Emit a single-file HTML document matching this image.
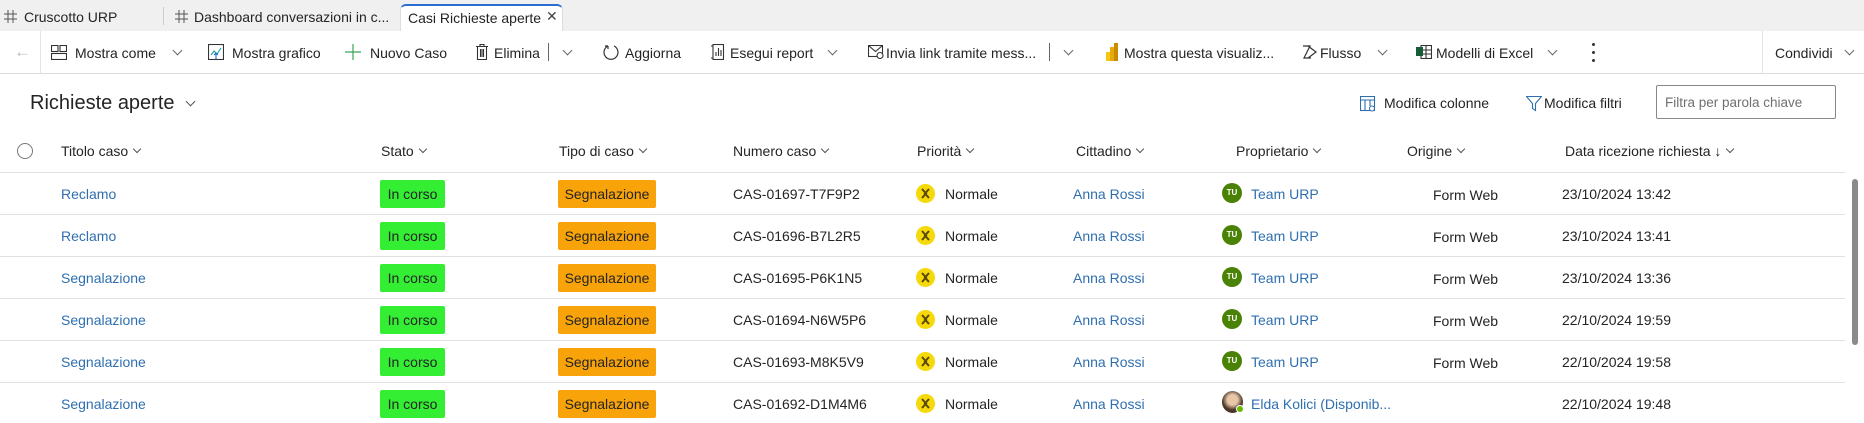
<!DOCTYPE html>
<html><head><meta charset="utf-8"><style>
*{margin:0;padding:0;box-sizing:border-box}
body{width:1864px;height:423px;overflow:hidden;background:#fff;font-family:"Liberation Sans",sans-serif;color:#242424;font-size:14px;position:relative}
.a{position:absolute;white-space:nowrap}
.tabs{position:absolute;left:0;top:0;width:1864px;height:31px;background:#f0f0f0}
.tb{position:absolute;left:0;top:31px;width:1864px;height:43px;border-bottom:1px solid #dcdcdc;background:#fff}
.tt{top:45px;font-size:14px;color:#242424}
.ch{position:absolute;top:47px;width:7px;height:7px;border-right:1px solid #666;border-bottom:1px solid #666;transform:rotate(45deg)}
.h{top:143px;font-size:14px;color:#242424}
.h:after{content:"";display:inline-block;width:5px;height:5px;border-right:1px solid #555;border-bottom:1px solid #555;transform:rotate(45deg);margin-left:6px;vertical-align:4px}
.sep{position:absolute;left:0;width:1845px;height:1px;background:#e1e1e1}
.lk{color:#2f6fb0}
.bg{position:absolute;left:380px;width:65px;height:28px;background:#33ee33;border-radius:2px;text-align:center;line-height:28px;color:#242424}
.bo{position:absolute;left:558px;width:98px;height:28px;background:#f8a30a;border-radius:2px;text-align:center;line-height:28px;color:#242424}
.pi{position:absolute;left:916px;width:19px;height:19px;border-radius:50%;background:#f5d90a}
.av{position:absolute;left:1222px;width:20px;height:20px;border-radius:50%;background:#498205;color:#fff;font-size:8px;font-weight:bold;text-align:center;line-height:20px}
</style></head><body>
<svg width="0" height="0" style="position:absolute"><defs><symbol id="px" viewBox="0 0 19 19"><path d="M6 5l4 4.5-4 4.5M13 5l-4 4.5 4 4.5" fill="none" stroke="#5a4a00" stroke-width="2"/></symbol></defs></svg>
<div class="tabs"></div>
<div class="a" style="left:400px;top:4px;width:163px;height:28px;background:#fff;border-top:2px solid #2a6fd0;border-radius:6px 6px 0 0;border-left:1px solid #ddd;border-right:1px solid #ddd"></div>
<svg class="a" style="left:4px;top:10px" width="13" height="13" viewBox="0 0 13 13" stroke="#555" fill="none"><path d="M0 4h13M0 9h13M4 0v13M9 0v13"/></svg>
<div class="a" style="left:24px;top:9px;font-size:14px">Cruscotto URP</div>
<div class="a" style="left:163px;top:7px;width:1px;height:18px;background:#ccc"></div>
<svg class="a" style="left:175px;top:10px" width="13" height="13" viewBox="0 0 13 13" stroke="#555" fill="none"><path d="M0 4h13M0 9h13M4 0v13M9 0v13"/></svg>
<div class="a" style="left:194px;top:9px;font-size:14px">Dashboard conversazioni in c...</div>
<div class="a" style="left:408px;top:10px;font-size:14px">Casi Richieste aperte</div>
<div class="a" style="left:546px;top:8px;font-size:14px;color:#444">&#x2715;</div>

<div class="tb"></div>
<div class="a" style="left:14px;top:42px;color:#bbb;font-size:17px">&#x2190;</div>
<div class="a" style="left:40px;top:31px;width:1px;height:43px;background:#e3e3e3"></div>
<svg class="a" style="left:51px;top:45px" width="16" height="15" viewBox="0 0 16 15" fill="none" stroke="#333" stroke-width="1.1"><rect x="0.5" y="0.5" width="6.5" height="6"/><rect x="9" y="0.5" width="6.5" height="6"/><rect x="0.5" y="8.5" width="15" height="6"/></svg>
<div class="a tt" style="left:75px">Mostra come</div><div class="ch" style="left:174px"></div>
<svg class="a" style="left:208px;top:44px" width="16" height="16" viewBox="0 0 16 16" fill="none" stroke="#333" stroke-width="1.1"><rect x="0.5" y="0.5" width="15" height="15"/><path d="M3 11l3-4 3 3 4-6" stroke="#1aa0a0"/><path d="M8 15V9m-2 2l2-2 2 2" stroke="#1a6fd0"/></svg>
<div class="a tt" style="left:232px">Mostra grafico</div>
<svg class="a" style="left:345px;top:44px" width="16" height="16" viewBox="0 0 16 16" stroke="#3aa35a" stroke-width="1.2"><path d="M8 0v16M0 8h16"/></svg>
<div class="a tt" style="left:370px">Nuovo Caso</div>
<svg class="a" style="left:476px;top:44px" width="12" height="16" viewBox="0 0 12 16" fill="none" stroke="#333" stroke-width="1.1"><path d="M0 2.5h12M4 2.5V.5h4v2M1.5 2.5v13h9v-13M4.5 5v8M6 5v8M7.5 5v8"/></svg>
<div class="a tt" style="left:494px">Elimina</div>
<div class="a" style="left:548px;top:43px;width:1px;height:18px;background:#666"></div>
<div class="ch" style="left:564px"></div>
<svg class="a" style="left:603px;top:44px" width="16" height="16" viewBox="0 0 16 16" fill="none" stroke="#333" stroke-width="1.2"><path d="M5 2A7 7 0 1 0 11 2"/><path d="M5 2V5M5 2H2"/></svg>
<div class="a tt" style="left:625px">Aggiorna</div>
<svg class="a" style="left:711px;top:44px" width="14" height="16" viewBox="0 0 14 16" fill="none" stroke="#333" stroke-width="1.1"><rect x="2" y="0.5" width="10.5" height="15"/><path d="M0 2h2M0 14h2M5 12V8M7.5 12V4M10 12V6"/></svg>
<div class="a tt" style="left:730px">Esegui report</div><div class="ch" style="left:829px"></div>
<svg class="a" style="left:868px;top:45px" width="16" height="14" viewBox="0 0 16 14" fill="none" stroke="#333" stroke-width="1.1"><rect x="0.5" y="0.5" width="14" height="11"/><path d="M0.5 0.5l7 6 7-6"/><circle cx="12" cy="10.5" r="3" fill="#fff"/></svg>
<div class="a tt" style="left:886px">Invia link tramite mess...</div>
<div class="a" style="left:1049px;top:43px;width:1px;height:18px;background:#666"></div>
<div class="ch" style="left:1065px"></div>
<svg class="a" style="left:1106px;top:43px" width="12" height="18" viewBox="0 0 12 18"><rect x="0" y="9" width="4" height="9" fill="#f2c811"/><rect x="4" y="4" width="4" height="14" fill="#e8a90a"/><rect x="8" y="0" width="4" height="18" fill="#c98b00"/></svg>
<div class="a tt" style="left:1124px">Mostra questa visualiz...</div>
<svg class="a" style="left:1302px;top:45px" width="15" height="14" viewBox="0 0 15 14" fill="none" stroke="#333" stroke-width="1.2"><path d="M1 1h7L2 13h7M6 1l8 6-8 6"/></svg>
<div class="a tt" style="left:1320px">Flusso</div><div class="ch" style="left:1379px"></div>
<svg class="a" style="left:1416px;top:45px" width="16" height="14" viewBox="0 0 16 14" fill="none" stroke="#333" stroke-width="1.1"><rect x="5" y="0.5" width="10.5" height="13"/><path d="M5 5h10.5M5 9h10.5M10 0.5v13"/><rect x="0" y="2" width="7" height="9" fill="#185c37" stroke="none"/></svg>
<div class="a tt" style="left:1436px">Modelli di Excel</div><div class="ch" style="left:1549px"></div>
<div class="a" style="left:1592px;top:43px;width:3px;height:3px;background:#333;border-radius:50%"></div>
<div class="a" style="left:1592px;top:51px;width:3px;height:3px;background:#333;border-radius:50%"></div>
<div class="a" style="left:1592px;top:59px;width:3px;height:3px;background:#333;border-radius:50%"></div>
<div class="a" style="left:1762px;top:31px;width:1px;height:43px;background:#e3e3e3"></div>
<div class="a tt" style="left:1775px">Condividi</div><div class="ch" style="left:1846px"></div>

<div class="a" style="left:30px;top:92px;font-size:20px;color:#242424">Richieste aperte</div>
<div class="a" style="left:187px;top:98px;width:7px;height:7px;border-right:1px solid #555;border-bottom:1px solid #555;transform:rotate(45deg)"></div>
<svg class="a" style="left:1360px;top:96px" width="16" height="16" viewBox="0 0 16 16" fill="none" stroke="#2f6fb0" stroke-width="1.1"><rect x="0.5" y="0.5" width="14" height="14"/><path d="M0.5 4h14M5 4v11M10 4v6"/><circle cx="12" cy="12.5" r="2.5" fill="#fff"/></svg>
<div class="a" style="left:1384px;top:95px">Modifica colonne</div>
<svg class="a" style="left:1526px;top:96px" width="16" height="16" viewBox="0 0 16 16" fill="none" stroke="#2f6fb0" stroke-width="1.1"><path d="M0.5 0.5h15l-6 7v7l-3-2v-5z"/></svg>
<div class="a" style="left:1544px;top:95px">Modifica filtri</div>
<div class="a" style="left:1656px;top:85px;width:180px;height:34px;border:1px solid #888;border-radius:2px"></div>
<div class="a" style="left:1665px;top:95px;color:#707070;font-size:13.5px">Filtra per parola chiave</div>

<div class="a" style="left:17px;top:143px;width:16px;height:16px;border:1px solid #777;border-radius:50%"></div>
<div class="a h" style="left:61px">Titolo caso</div>
<div class="a h" style="left:381px">Stato</div>
<div class="a h" style="left:559px">Tipo di caso</div>
<div class="a h" style="left:733px">Numero caso</div>
<div class="a h" style="left:917px">Priorità</div>
<div class="a h" style="left:1076px">Cittadino</div>
<div class="a h" style="left:1236px">Proprietario</div>
<div class="a h" style="left:1407px">Origine</div>
<div class="a h" style="left:1565px">Data ricezione richiesta &#x2193;</div>

<div class="sep" style="top:172px"></div>
<div class="sep" style="top:214px"></div>
<div class="sep" style="top:256px"></div>
<div class="sep" style="top:298px"></div>
<div class="sep" style="top:340px"></div>
<div class="sep" style="top:382px"></div>

<div class="a lk" style="left:61px;top:186px">Reclamo</div>
<div class="bg" style="top:180px">In corso</div><div class="bo" style="top:180px">Segnalazione</div>
<div class="a" style="left:733px;top:186px">CAS-01697-T7F9P2</div>
<svg class="pi" style="top:184px"><use href="#px"/></svg><div class="a" style="left:945px;top:186px">Normale</div>
<div class="a lk" style="left:1073px;top:186px">Anna Rossi</div>
<div class="av" style="top:183px">TU</div><div class="a lk" style="left:1251px;top:186px">Team URP</div>
<div class="a" style="left:1433px;top:187px">Form Web</div>
<div class="a" style="left:1562px;top:186px">23/10/2024 13:42</div>

<div class="a lk" style="left:61px;top:228px">Reclamo</div>
<div class="bg" style="top:222px">In corso</div><div class="bo" style="top:222px">Segnalazione</div>
<div class="a" style="left:733px;top:228px">CAS-01696-B7L2R5</div>
<svg class="pi" style="top:226px"><use href="#px"/></svg><div class="a" style="left:945px;top:228px">Normale</div>
<div class="a lk" style="left:1073px;top:228px">Anna Rossi</div>
<div class="av" style="top:225px">TU</div><div class="a lk" style="left:1251px;top:228px">Team URP</div>
<div class="a" style="left:1433px;top:229px">Form Web</div>
<div class="a" style="left:1562px;top:228px">23/10/2024 13:41</div>

<div class="a lk" style="left:61px;top:270px">Segnalazione</div>
<div class="bg" style="top:264px">In corso</div><div class="bo" style="top:264px">Segnalazione</div>
<div class="a" style="left:733px;top:270px">CAS-01695-P6K1N5</div>
<svg class="pi" style="top:268px"><use href="#px"/></svg><div class="a" style="left:945px;top:270px">Normale</div>
<div class="a lk" style="left:1073px;top:270px">Anna Rossi</div>
<div class="av" style="top:267px">TU</div><div class="a lk" style="left:1251px;top:270px">Team URP</div>
<div class="a" style="left:1433px;top:271px">Form Web</div>
<div class="a" style="left:1562px;top:270px">23/10/2024 13:36</div>

<div class="a lk" style="left:61px;top:312px">Segnalazione</div>
<div class="bg" style="top:306px">In corso</div><div class="bo" style="top:306px">Segnalazione</div>
<div class="a" style="left:733px;top:312px">CAS-01694-N6W5P6</div>
<svg class="pi" style="top:310px"><use href="#px"/></svg><div class="a" style="left:945px;top:312px">Normale</div>
<div class="a lk" style="left:1073px;top:312px">Anna Rossi</div>
<div class="av" style="top:309px">TU</div><div class="a lk" style="left:1251px;top:312px">Team URP</div>
<div class="a" style="left:1433px;top:313px">Form Web</div>
<div class="a" style="left:1562px;top:312px">22/10/2024 19:59</div>

<div class="a lk" style="left:61px;top:354px">Segnalazione</div>
<div class="bg" style="top:348px">In corso</div><div class="bo" style="top:348px">Segnalazione</div>
<div class="a" style="left:733px;top:354px">CAS-01693-M8K5V9</div>
<svg class="pi" style="top:352px"><use href="#px"/></svg><div class="a" style="left:945px;top:354px">Normale</div>
<div class="a lk" style="left:1073px;top:354px">Anna Rossi</div>
<div class="av" style="top:351px">TU</div><div class="a lk" style="left:1251px;top:354px">Team URP</div>
<div class="a" style="left:1433px;top:355px">Form Web</div>
<div class="a" style="left:1562px;top:354px">22/10/2024 19:58</div>

<div class="a lk" style="left:61px;top:396px">Segnalazione</div>
<div class="bg" style="top:390px">In corso</div><div class="bo" style="top:390px">Segnalazione</div>
<div class="a" style="left:733px;top:396px">CAS-01692-D1M4M6</div>
<svg class="pi" style="top:394px"><use href="#px"/></svg><div class="a" style="left:945px;top:396px">Normale</div>
<div class="a lk" style="left:1073px;top:396px">Anna Rossi</div>
<div class="a" style="left:1222px;top:391px;width:21px;height:22px;border-radius:50%;background:radial-gradient(circle at 50% 40%,#e8c7a8 30%,#4a3528 60%)"></div>
<div class="a" style="left:1236px;top:405px;width:8px;height:8px;border-radius:50%;background:#6bb700;border:1px solid #fff"></div>
<div class="a lk" style="left:1251px;top:396px">Elda Kolici (Disponib...</div>
<div class="a" style="left:1562px;top:396px">22/10/2024 19:48</div>

<div class="a" style="left:1852px;top:179px;width:6px;height:166px;background:#8a8a8a;border-radius:3px"></div>
</body></html>
